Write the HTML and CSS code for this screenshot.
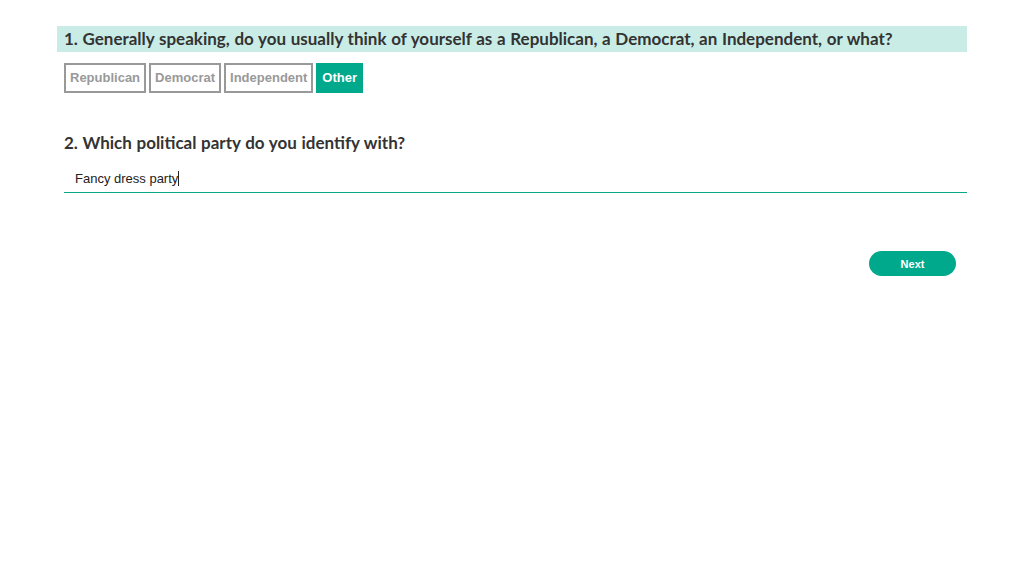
FILE: index.html
```html
<!DOCTYPE html>
<html>
<head>
<meta charset="utf-8">
<link rel="stylesheet" href="styles.css">
</head>
<body>
<div class="survey">
  <div class="question q1">
    <h2 class="q-title highlighted">1. Generally speaking, do you usually think of yourself as a Republican, a Democrat, an Independent, or what?</h2>
    <div class="options">
      <button class="opt">Republican</button>
      <button class="opt">Democrat</button>
      <button class="opt">Independent</button>
      <button class="opt selected">Other</button>
    </div>
  </div>
  <div class="question q2">
    <h2 class="q-title">2. Which political party do you identify with?</h2>
    <div class="answer"><span class="answer-text">Fancy dress party</span><span class="caret"></span></div>
  </div>
  <div class="nav">
    <button class="next">Next</button>
  </div>
</div>
</body>
</html>
```

FILE: styles.css
```css
html, body {
  margin: 0;
  padding: 0;
  background: #fff;
}
.survey {
  width: 910px;
  margin-left: 57px;
  padding-top: 26px;
  font-family: "Lato", "Open Sans", sans-serif;
  color: #333;
}
.q-title {
  margin: 0;
  font-size: 17px;
  font-weight: 700;
  line-height: 26px;
  padding-left: 7px;
  word-spacing: 0.5px;
  color: #333;
}
.highlighted {
  background: #c9ede6;
}
.options {
  display: flex;
  gap: 3px;
  margin-top: 11px;
  padding-left: 7px;
}
.opt {
  font-family: "Liberation Sans", Arial, sans-serif;
  font-weight: 700;
  font-size: 13px;
  line-height: 15px;
  color: #999;
  background: #fff;
  border: 2px solid #999;
  height: 30px;
  padding: 0 4px 1px;
  margin: 0;
  border-radius: 0;
}
.opt.selected {
  background: #00a98b;
  border-color: #00a98b;
  color: #fff;
}
.q2 {
  margin-top: 37px;
}
.answer {
  margin-left: 7px;
  margin-top: 9px;
  height: 27px;
  border-bottom: 1px solid #0aa88a;
  padding-left: 11px;
  font-family: "Liberation Sans", Arial, sans-serif;
  font-size: 13px;
  line-height: 20px;
  color: #222;
  display: flex;
  align-items: center;
}
.caret {
  display: inline-block;
  width: 1px;
  height: 15px;
  background: #222;
}
.nav {
  display: flex;
  justify-content: flex-end;
  margin-top: 58px;
  padding-right: 11px;
}
.next {
  width: 87px;
  height: 25px;
  border: none;
  border-radius: 13px;
  background: #00a98b;
  color: #fff;
  font-family: "Liberation Sans", Arial, sans-serif;
  font-weight: 700;
  font-size: 11px;
  padding: 0;
}
```
